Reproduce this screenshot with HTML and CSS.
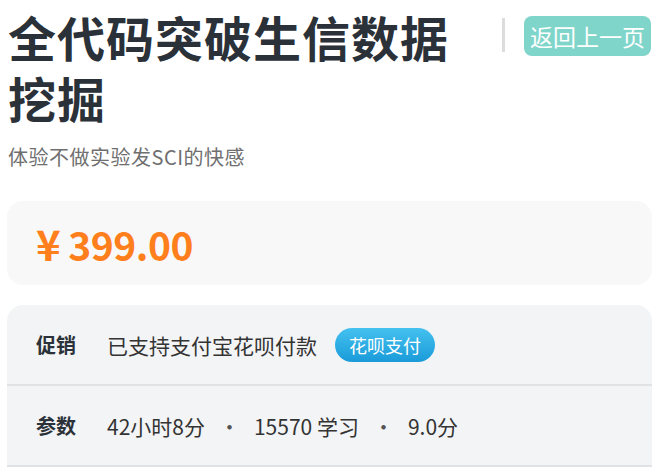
FILE: index.html
```html
<!DOCTYPE html>
<html lang="zh">
<head>
<meta charset="utf-8">
<link rel="stylesheet" href="styles.css">
</head>
<body>
<div class="page">
  <div class="header">
    <h1 class="title">全代码突破生信数据挖掘</h1>
    <div class="divider"></div>
    <a class="back-btn">返回上一页</a>
  </div>
  <p class="subtitle">体验不做实验发SCI的快感</p>
  <div class="price-box">
    <span class="price"><span class="yen">¥</span>399.00</span>
  </div>
  <div class="info-box">
    <div class="info-row">
      <span class="label">促销</span>
      <span class="value">已支持支付宝花呗付款</span>
      <span class="badge">花呗支付</span>
    </div>
    <div class="info-row">
      <span class="label">参数</span>
      <span class="value">42小时8分</span>
      <span class="dot">·</span>
      <span class="value">15570 学习</span>
      <span class="dot">·</span>
      <span class="value">9.0分</span>
    </div>
  </div>
</div>
</body>
</html>
```
FILE: styles.css
```css
* { box-sizing: border-box; }
html, body { margin: 0; padding: 0; background: #fff; }
body {
  font-family: "Noto Sans CJK SC", "Noto Sans", sans-serif;
  color: #333;
}
.page {
  width: 666px;
  padding: 6px 14px 0 7px;
}
.header {
  display: flex;
  align-items: flex-start;
}
.title {
  flex: 0 0 470px;
  margin: 0;
  padding-left: 1px;
  font-size: 48px;
  font-weight: 700;
  line-height: 61px;
  color: #2b3138;
  letter-spacing: 1px;
}
.divider {
  width: 3px;
  height: 34px;
  background: #dcdcdc;
  margin: 12px 0 0 25px;
}
.back-btn {
  margin: 10px 0 0 19px;
  height: 40px;
  padding: 0 6px;
  background: #80d5ca;
  color: #fff;
  font-size: 23px;
  line-height: 40px;
  border-radius: 8px;
  white-space: nowrap;
}
.subtitle {
  margin: 15px 0 0 1px;
  font-size: 20px;
  line-height: 28px;
  color: #6f6f6f;
  letter-spacing: 0.5px;
}
.price-box {
  margin-top: 30px;
  height: 84px;
  background: #f8f8f9;
  border-radius: 16px;
  display: flex;
  align-items: center;
  padding-left: 29px;
}
.price {
  font-size: 39px;
  font-weight: 700;
  color: #ff7f1c;
  line-height: 1;
  letter-spacing: -0.5px;
}
.yen {
  font-size: 42px;
  margin-right: 8px;
}
.info-box {
  margin-top: 20px;
  background: #f3f4f6;
  border-radius: 16px 16px 0 0;
}
.info-row {
  display: flex;
  align-items: center;
  height: 81px;
  padding-left: 29px;
  border-bottom: 2px solid #e0e2e6;
  font-size: 21px;
}
.label {
  font-weight: 700;
  font-size: 20px;
  color: #2b3138;
  width: 71px;
}
.value {
  color: #333;
}
.badge {
  margin-left: 18px;
  height: 34px;
  padding: 0 14px;
  border-radius: 17px;
  background: linear-gradient(180deg, #44c1ef 0%, #1a9bd9 100%);
  color: #fff;
  font-size: 18px;
  line-height: 34px;
}
.dot {
  margin: 0 14px;
  color: #555;
}
```
